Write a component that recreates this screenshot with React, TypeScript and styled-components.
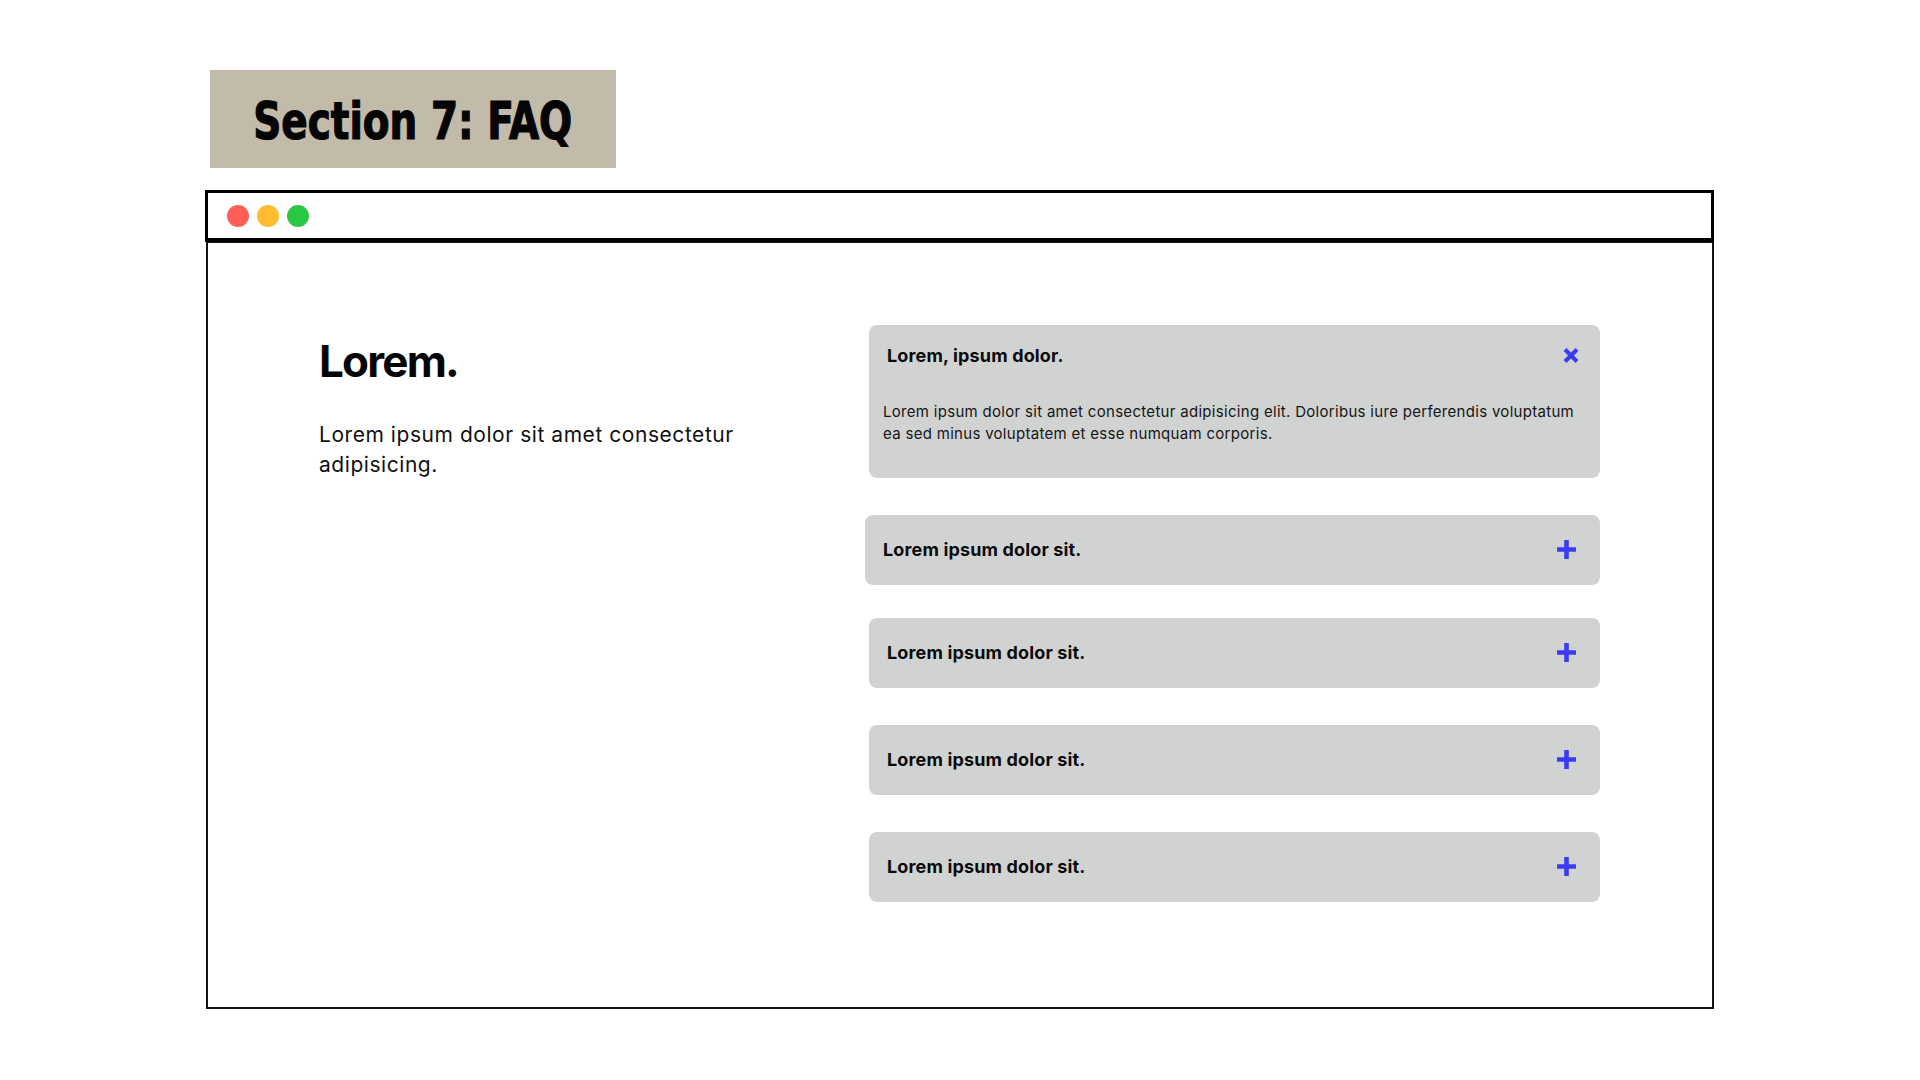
import React from "react";
import styled, { createGlobalStyle } from "styled-components";

const GlobalStyle = createGlobalStyle`
  html, body { margin: 0; padding: 0; background: #ffffff; }
  body { font-family: Inter, "Noto Sans", sans-serif; color: #111; }
  * { box-sizing: border-box; }
`;

const Page = styled.div`
  width: 1920px;
  height: 1080px;
  padding: 70px 0 0 205px;
  display: flex;
  flex-direction: column;
  align-items: flex-start;
`;

const SectionBadge = styled.div`
  margin-left: 5px;
  width: 406px;
  height: 98px;
  background: #c3bba9;
  display: flex;
  align-items: center;
  justify-content: center;
`;

const SectionTitle = styled.h1`
  margin: 0;
  font-family: "DejaVu Sans Condensed", "DejaVu Sans", sans-serif;
  font-weight: 900;
  font-size: 51px;
  line-height: 1;
  letter-spacing: 0;
  color: #050505;
  padding-top: 4px;
  white-space: nowrap;
  -webkit-text-stroke: 1.2px #050505;
  transform: scaleX(0.85);
`;

const BrowserWindow = styled.div`
  margin-top: 22px;
  width: 1509px;
  display: flex;
  flex-direction: column;
`;

const TitleBar = styled.div`
  height: 52px;
  border: 3px solid #000;
  border-bottom-width: 4px;
  display: flex;
  align-items: center;
  gap: 8px;
  padding-left: 19px;
`;

const Dot = styled.span<{ $color: string }>`
  width: 22px;
  height: 22px;
  border-radius: 50%;
  background: ${(p) => p.$color};
`;

const Content = styled.div`
  margin-left: 1px;
  height: 767px;
  border: 2px solid #111;
  border-top-width: 1px;
  display: grid;
  grid-template-columns: 430px 731px;
  column-gap: 120px;
  align-items: start;
  padding: 82px 0 0 111px;
`;

const Intro = styled.div`
  margin-top: 10px;
  display: flex;
  flex-direction: column;
`;

const IntroHeading = styled.h2`
  margin: 0;
  font-family: Inter, sans-serif;
  font-weight: 700;
  font-size: 44px;
  line-height: 1.2;
  letter-spacing: -1.8px;
  color: #050505;
`;

const IntroText = styled.p`
  margin: 32px 0 0;
  font-family: Inter, sans-serif;
  font-size: 21px;
  line-height: 30px;
  letter-spacing: 0.55px;
  color: #111;
`;

const FaqList = styled.div`
  display: flex;
  flex-direction: column;
  gap: 37px;
`;

const FaqCard = styled.div<{ $open?: boolean; $hovered?: boolean }>`
  background: #d1d3d2;
  border-radius: 8px;
  display: flex;
  flex-direction: column;
  min-height: 70px;
  justify-content: ${(p) => (p.$open ? "flex-start" : "center")};
  padding: ${(p) => (p.$open ? "20px 0 33px" : "0")};
  margin-left: ${(p) => (p.$hovered ? "-4px" : "0")};
  margin-bottom: ${(p) => (p.$hovered ? "-4px" : "0")};
`;

const FaqHeader = styled.div`
  display: flex;
  align-items: center;
  justify-content: space-between;
  padding: 0 22px 0 18px;
`;

const FaqQuestion = styled.h3`
  margin: 0;
  font-family: Inter, sans-serif;
  font-weight: 700;
  font-size: 18px;
  line-height: 1.2;
  letter-spacing: 0.15px;
  color: #0a0a0a;
`;

const FaqAnswer = styled.p`
  margin: 34px 0 0;
  padding: 0 14px;
  font-family: Inter, sans-serif;
  font-size: 15px;
  line-height: 22px;
  letter-spacing: 0.3px;
  color: #151515;
`;

const IconBox = styled.span<{ $shift?: number }>`
  display: flex;
  align-items: center;
  justify-content: center;
  width: 19px;
  height: 19px;
  margin-right: ${(p) => p.$shift ?? 0}px;
`;

const BLUE = "#3b3bf6";

const CloseIcon = () => (
  <svg width="16" height="15" viewBox="0 0 16 15">
    <path d="M2 1.5 L14 13.5 M14 1.5 L2 13.5" stroke={BLUE} strokeWidth="4" strokeLinecap="butt" />
  </svg>
);

const PlusIcon = () => (
  <svg width="19" height="19" viewBox="0 0 19 19">
    <path d="M9.5 0 V19 M0 9.5 H19" stroke={BLUE} strokeWidth="4.6" />
  </svg>
);

const questions = [
  "Lorem ipsum dolor sit.",
  "Lorem ipsum dolor sit.",
  "Lorem ipsum dolor sit.",
  "Lorem ipsum dolor sit.",
];

export default function App() {
  return (
    <>
      <GlobalStyle />
      <Page>
        <SectionBadge>
          <SectionTitle>Section 7: FAQ</SectionTitle>
        </SectionBadge>
        <BrowserWindow>
          <TitleBar>
            <Dot $color="#fe5f57" />
            <Dot $color="#febc2e" />
            <Dot $color="#28c840" />
          </TitleBar>
          <Content>
            <Intro>
              <IntroHeading>Lorem.</IntroHeading>
              <IntroText>
                Lorem ipsum dolor sit amet consectetur adipisicing.
              </IntroText>
            </Intro>
            <FaqList>
              <FaqCard $open>
                <FaqHeader>
                  <FaqQuestion>Lorem, ipsum dolor.</FaqQuestion>
                  <IconBox $shift={-2}>
                    <CloseIcon />
                  </IconBox>
                </FaqHeader>
                <FaqAnswer>
                  Lorem ipsum dolor sit amet consectetur adipisicing elit. Doloribus iure
                  perferendis voluptatum ea sed minus voluptatem et esse numquam corporis.
                </FaqAnswer>
              </FaqCard>
              {questions.map((q, i) => (
                <FaqCard key={i} $hovered={i === 0}>
                  <FaqHeader>
                    <FaqQuestion>{q}</FaqQuestion>
                    <IconBox $shift={2}>
                      <PlusIcon />
                    </IconBox>
                  </FaqHeader>
                </FaqCard>
              ))}
            </FaqList>
          </Content>
        </BrowserWindow>
      </Page>
    </>
  );
}
